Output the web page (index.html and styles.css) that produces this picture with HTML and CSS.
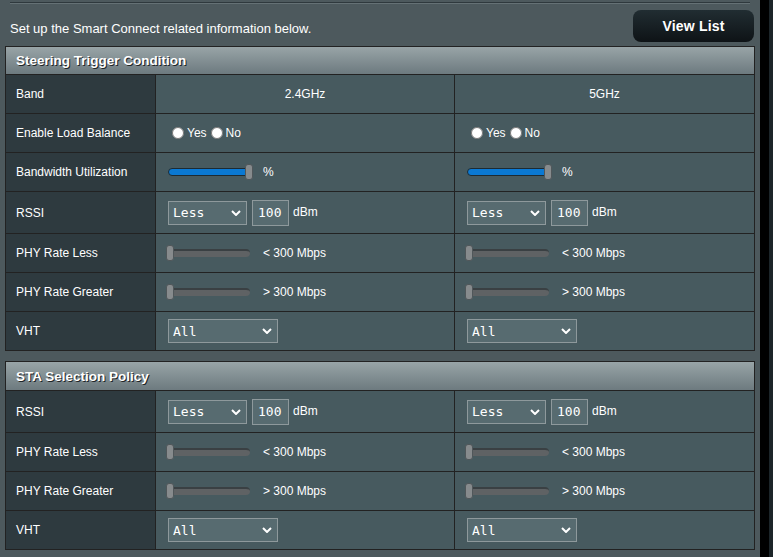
FILE: index.html
```html
<!DOCTYPE html>
<html>
<head>
<meta charset="utf-8">
<link rel="stylesheet" href="styles.css">
</head>
<body>
<div class="frame">
  <div class="page">
    <div class="rule"></div>
    <div class="intro">
      <span class="desc">Set up the Smart Connect related information below.</span>
      <button class="btn">View List</button>
    </div>

    <section class="ftable">
      <div class="thead">Steering Trigger Condition</div>
      <div class="row">
        <div class="th">Band</div>
        <div class="td center">2.4GHz</div>
        <div class="td center">5GHz</div>
      </div>
      <div class="row">
        <div class="th">Enable Load Balance</div>
        <div class="td"><input type="radio" name="lb0" class="radio"><span>Yes</span><input type="radio" name="lb0" class="radio"><span>No</span></div>
        <div class="td"><input type="radio" name="lb1" class="radio"><span>Yes</span><input type="radio" name="lb1" class="radio"><span>No</span></div>
      </div>
      <div class="row">
        <div class="th">Bandwidth Utilization</div>
        <div class="td"><div class="range full"><div class="track"></div><div class="thumb"></div></div><span class="after">%</span></div>
        <div class="td"><div class="range full"><div class="track"></div><div class="thumb"></div></div><span class="after">%</span></div>
      </div>
      <div class="row tall">
        <div class="th">RSSI</div>
        <div class="td"><select class="sel short"><option>Less</option></select><input class="num" type="text" value="100"><span class="unit">dBm</span></div>
        <div class="td"><select class="sel short"><option>Less</option></select><input class="num" type="text" value="100"><span class="unit">dBm</span></div>
      </div>
      <div class="row">
        <div class="th">PHY Rate Less</div>
        <div class="td"><div class="range empty"><div class="track"></div><div class="thumb"></div></div><span class="after">&lt; 300 Mbps</span></div>
        <div class="td"><div class="range empty"><div class="track"></div><div class="thumb"></div></div><span class="after">&lt; 300 Mbps</span></div>
      </div>
      <div class="row">
        <div class="th">PHY Rate Greater</div>
        <div class="td"><div class="range empty"><div class="track"></div><div class="thumb"></div></div><span class="after">&gt; 300 Mbps</span></div>
        <div class="td"><div class="range empty"><div class="track"></div><div class="thumb"></div></div><span class="after">&gt; 300 Mbps</span></div>
      </div>
      <div class="row">
        <div class="th">VHT</div>
        <div class="td"><select class="sel long"><option>All</option></select></div>
        <div class="td"><select class="sel long"><option>All</option></select></div>
      </div>
    </section>

    <section class="ftable second">
      <div class="thead">STA Selection Policy</div>
      <div class="row tall">
        <div class="th">RSSI</div>
        <div class="td"><select class="sel short"><option>Less</option></select><input class="num" type="text" value="100"><span class="unit">dBm</span></div>
        <div class="td"><select class="sel short"><option>Less</option></select><input class="num" type="text" value="100"><span class="unit">dBm</span></div>
      </div>
      <div class="row">
        <div class="th">PHY Rate Less</div>
        <div class="td"><div class="range empty"><div class="track"></div><div class="thumb"></div></div><span class="after">&lt; 300 Mbps</span></div>
        <div class="td"><div class="range empty"><div class="track"></div><div class="thumb"></div></div><span class="after">&lt; 300 Mbps</span></div>
      </div>
      <div class="row">
        <div class="th">PHY Rate Greater</div>
        <div class="td"><div class="range empty"><div class="track"></div><div class="thumb"></div></div><span class="after">&gt; 300 Mbps</span></div>
        <div class="td"><div class="range empty"><div class="track"></div><div class="thumb"></div></div><span class="after">&gt; 300 Mbps</span></div>
      </div>
      <div class="row">
        <div class="th">VHT</div>
        <div class="td"><select class="sel long"><option>All</option></select></div>
        <div class="td"><select class="sel long"><option>All</option></select></div>
      </div>
    </section>
  </div>
  <div class="edge"></div>
  <div class="edge2"></div>
</div>
</body>
</html>
```
FILE: styles.css
```css
html, body {
  margin: 0;
  padding: 0;
}
body {
  background: #4d595d;
  font-family: "Liberation Sans", Arial, sans-serif;
  color: #fff;
  width: 773px;
  height: 557px;
  overflow: hidden;
}
.frame {
  display: flex;
  height: 557px;
}
.page {
  width: 760px;
  padding-top: 2px;
  background: #4d595d;
}
.edge {
  width: 9px;
  background: #000;
}
.edge2 {
  width: 4px;
  background: #1c2529;
}
.rule {
  margin: 0 10px;
  height: 0;
  border-top: 1px solid #2f393d;
  border-bottom: 1px solid #657175;
}
.intro {
  height: 42px;
  box-sizing: border-box;
  display: flex;
  justify-content: space-between;
  align-items: flex-start;
  padding: 6px 6px 4px 10px;
}
.desc {
  font-size: 13px;
  line-height: 15px;
  margin-top: 11px;
}
.btn {
  width: 121px;
  height: 32px;
  border: none;
  border-radius: 8px;
  background: linear-gradient(#212d32, #0e1316);
  color: #fff;
  font-family: "Liberation Sans", Arial, sans-serif;
  font-weight: bold;
  font-size: 14px;
  letter-spacing: 0.2px;
  padding: 0;
}
.ftable {
  margin-left: 5px;
  width: 750px;
  box-sizing: border-box;
  border: 1px solid #222;
}
.ftable.second {
  margin-top: 10px;
}
.thead {
  height: 27px;
  display: flex;
  align-items: center;
  padding-left: 10px;
  background: linear-gradient(#98a4a7, #6d7a7f);
  font-weight: bold;
  font-size: 13.5px;
  text-shadow: 1px 1px 0 #1e2528;
}
.second .thead {
  height: 28px;
}
.row {
  display: grid;
  grid-template-columns: 150px 299px 299px;
  height: 39px;
  box-sizing: border-box;
  border-top: 1px solid #222;
}
.row.tall {
  height: 42px;
}
.th {
  background: #2e3a3f;
  border-right: 1px solid #222;
  display: flex;
  align-items: center;
  padding-left: 10px;
  font-size: 12px;
}
.td {
  background: #475a5f;
  display: flex;
  align-items: center;
  padding-left: 12px;
  font-size: 12px;
}
.td:nth-child(2) {
  border-right: 1px solid #222;
}
.td.center {
  justify-content: center;
  padding-left: 0;
}
.radio {
  width: 12px;
  height: 12px;
  margin: 0 3px 0 4px;
}
.range {
  position: relative;
  width: 87px;
  height: 17px;
  margin-left: -2px;
  flex: none;
}
.track {
  position: absolute;
  left: 2px;
  right: 3px;
  top: 4px;
  height: 8px;
  box-sizing: border-box;
  border-radius: 4px;
}
.full .track {
  background: #0b79d3;
  border: 1px solid #1d2b33;
}
.empty .track {
  background: #5f6264;
  border-top: 2px solid #3a4043;
}
.thumb {
  position: absolute;
  top: 0;
  width: 8px;
  height: 16px;
  box-sizing: border-box;
  border-radius: 3px;
  background: #878b8d;
  border: 1px solid #50575a;
}
.full .thumb {
  right: 0;
}
.empty .thumb {
  left: 0;
}
.after {
  margin-left: 10px;
}
.sel {
  appearance: none;
  -webkit-appearance: none;
  height: 24px;
  box-sizing: border-box;
  background: #576b70 url("data:image/svg+xml,%3Csvg xmlns='http://www.w3.org/2000/svg' width='10' height='6' viewBox='0 0 10 6'%3E%3Cpath d='M1 1l4 4 4-4' fill='none' stroke='%23fff' stroke-width='2'/%3E%3C/svg%3E") no-repeat right 5px center;
  border: 1px solid #8e999c;
  border-radius: 0;
  color: #fff;
  font-family: "DejaVu Sans Mono", monospace;
  font-size: 13px;
  padding: 0 0 0 4px;
  margin: 0;
}
.sel.short {
  width: 79px;
}
.sel.long {
  width: 110px;
}
.num {
  width: 37px;
  height: 26px;
  box-sizing: border-box;
  margin: 0 0 0 5px;
  padding: 0 0 0 5px;
  background: #576b70;
  border: 1px solid #8e999c;
  border-radius: 0;
  color: #fff;
  font-family: "DejaVu Sans Mono", monospace;
  font-size: 13px;
}
.unit {
  margin-left: 4px;
  margin-bottom: 2px;
}
```
